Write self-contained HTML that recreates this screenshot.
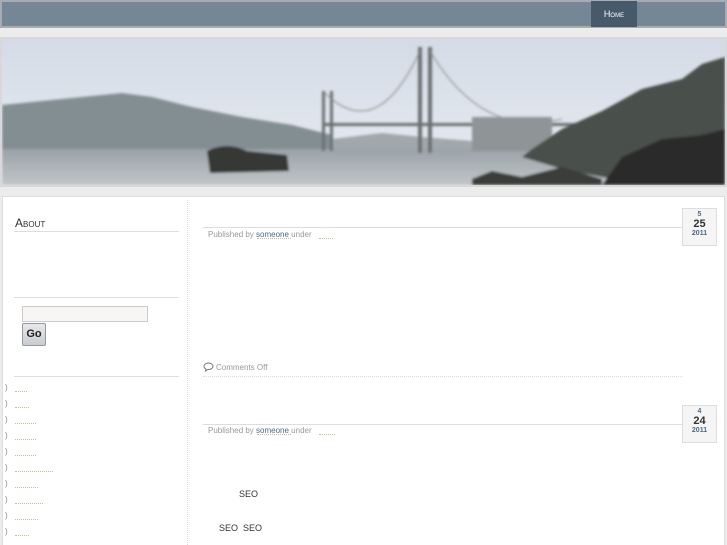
<!DOCTYPE html>
<html><head><style>
*{margin:0;padding:0;box-sizing:border-box}
html,body{width:727px;height:545px;overflow:hidden}
body{background:#ececec;font-family:"Liberation Sans",sans-serif;position:relative}
.a{position:absolute}
.dots{position:absolute;border-bottom:1px dotted #e0b890;height:1px}
.sm{font-size:8px;color:#999}
.date{position:absolute;width:35px;height:38px;background:#f5f5f5;border:1px solid #ddd;text-align:center;color:#4a6a8a;font-weight:bold}
</style></head><body>
<div class="a" style="left:0;top:0;width:727px;height:28px;background:#a8acb0"></div>
<div class="a" style="left:2px;top:2px;width:723px;height:24px;background:#758796"></div>
<div class="a" style="left:591px;top:1px;width:46px;height:26px;background:#475a6b;color:#fff;font-size:9px;font-variant:small-caps;text-align:center;line-height:26px">Home</div>
<div class="a" style="left:0;top:37px;width:727px;height:150px;background:#d8d8d8"></div>
<svg class="a" style="left:2px;top:39px" width="723" height="146" viewBox="0 0 723 146">
<defs><linearGradient id="s" x1="0" y1="0" x2="0" y2="1"><stop offset="0" stop-color="#d4dbe6"/><stop offset="1" stop-color="#e8ecf2"/></linearGradient>
<linearGradient id="w" x1="0" y1="0" x2="0" y2="1"><stop offset="0" stop-color="#9aa2a8"/><stop offset="1" stop-color="#c0c5c8"/></linearGradient>
<filter id="b"><feGaussianBlur stdDeviation="1.2"/></filter></defs>
<rect width="723" height="146" fill="url(#s)"/>
<g filter="url(#b)">
<path d="M0 66 L40 62 L80 58 L120 54 L150 58 L190 68 L240 78 L290 86 L330 96 L330 112 L0 112Z" fill="#838e93"/>
<path d="M330 100 L380 94 L420 98 L470 102 L470 112 L330 112Z" fill="#a0a8ab"/>
<rect x="0" y="110" width="723" height="36" fill="url(#w)"/>
<rect x="320" y="52" width="3" height="60" fill="#6b6f72"/><rect x="328" y="52" width="3" height="60" fill="#6b6f72"/>
<rect x="416" y="8" width="4" height="106" fill="#6b6f72"/><rect x="426" y="8" width="4" height="106" fill="#6b6f72"/>
<path d="M323 54 Q375 105 418 12 M428 12 Q480 100 560 80" fill="none" stroke="#888" stroke-width="1"/>
<rect x="323" y="84" width="250" height="3" fill="#6a6e70"/>
<rect x="470" y="78" width="80" height="34" fill="#8f9497"/>
<path d="M530 110 L560 90 L600 72 L640 50 L680 40 L700 25 L723 18 L723 146 L640 146 L560 130 L520 118Z" fill="#4a504b"/>
<path d="M600 146 L620 118 L660 100 L700 96 L723 90 L723 146Z" fill="#2a2c2a"/>
<path d="M205 112 Q225 102 245 112 L285 116 L287 132 L208 134Z" fill="#353836"/>
<path d="M470 140 L490 132 L520 138 L560 128 L600 140 L600 146 L470 146Z" fill="#3a3c3a"/>
</g>
</svg>
<div class="a" style="left:2px;top:196px;width:723px;height:349px;background:#fff;border:1px solid #ddd;border-bottom:none"></div>
<div class="a" style="left:187px;top:200px;height:345px;border-left:1px dotted #ddd"></div>
<div class="a" style="left:15px;top:216px;font-size:12px;font-variant:small-caps;color:#333">About</div>
<div class="a" style="left:14px;top:231px;width:165px;border-top:1px solid #ddd"></div>
<div class="a" style="left:14px;top:297px;width:165px;border-top:1px solid #ddd"></div>
<div class="a" style="left:22px;top:306px;width:126px;height:16px;background:#f8f6f4;border:1px solid #ccc"></div>
<div class="a" style="left:22px;top:323px;width:24px;height:23px;background:linear-gradient(#e8e8ec,#c8ccd0);border:1px solid #999;border-radius:2px;font-size:11px;font-weight:bold;text-align:center;line-height:21px;color:#222">Go</div>
<div class="a" style="left:14px;top:376px;width:165px;border-top:1px solid #ddd"></div>
<div class="a" style="left:5px;top:380px;font-size:8px;color:#888;line-height:16px">)<br>)<br>)<br>)<br>)<br>)<br>)<br>)<br>)<br>)</div>
<div class="dots" style="left:15px;top:391px;width:12px"></div>
<div class="dots" style="left:15px;top:407px;width:14px"></div>
<div class="dots" style="left:15px;top:423px;width:21px"></div>
<div class="dots" style="left:15px;top:439px;width:21px"></div>
<div class="dots" style="left:15px;top:455px;width:21px"></div>
<div class="dots" style="left:15px;top:471px;width:38px"></div>
<div class="dots" style="left:15px;top:487px;width:23px"></div>
<div class="dots" style="left:15px;top:503px;width:28px"></div>
<div class="dots" style="left:15px;top:519px;width:23px"></div>
<div class="dots" style="left:15px;top:535px;width:14px"></div>

<div class="a" style="left:203px;top:227px;width:480px;border-top:1px solid #ddd"></div>
<div class="a sm" style="left:208px;top:230px">Published by <span style="color:#4a6a90">someone</span> under</div>
<div class="dots" style="left:257px;top:238px;width:34px"></div>
<div class="dots" style="left:319px;top:238px;width:14px"></div>
<div class="date" style="left:682px;top:208px"><div style="font-size:7px;margin-top:2px">5</div><div style="font-size:11px;color:#333;line-height:12px">25</div><div style="font-size:7px">2011</div></div>
<svg class="a" style="left:203px;top:362px" width="11" height="10" viewBox="0 0 11 10"><path d="M5.5 1C3 1 1 2.5 1 4.3c0 1.2.8 2.2 2 2.8L2.5 9l2.3-1.5h.7c2.5 0 4.5-1.5 4.5-3.2S8 1 5.5 1z" fill="none" stroke="#777" stroke-width="1"/></svg>
<div class="a sm" style="left:216px;top:363px">Comments Off</div>
<div class="a" style="left:203px;top:376px;width:480px;border-top:1px dotted #ddd"></div>

<div class="a" style="left:203px;top:424px;width:480px;border-top:1px solid #ddd"></div>
<div class="a sm" style="left:208px;top:426px">Published by <span style="color:#4a6a90">someone</span> under</div>
<div class="dots" style="left:257px;top:434px;width:34px"></div>
<div class="dots" style="left:319px;top:434px;width:16px"></div>
<div class="date" style="left:682px;top:405px"><div style="font-size:7px;margin-top:2px">4</div><div style="font-size:11px;color:#333;line-height:12px">24</div><div style="font-size:7px">2011</div></div>
<div class="a" style="left:239px;top:489px;font-size:9px;color:#333">SEO</div>
<div class="a" style="left:219px;top:523px;font-size:9px;color:#333">SEO&nbsp;&nbsp;SEO</div>
</body></html>
